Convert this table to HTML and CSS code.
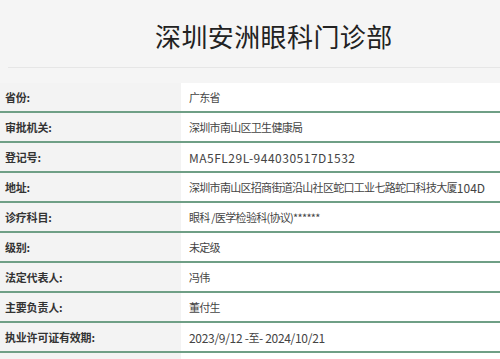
FILE: index.html
```html
<!DOCTYPE html>
<html lang="zh-CN">
<head>
<meta charset="utf-8">
<title>深圳安洲眼科门诊部</title>
<link rel="stylesheet" href="styles.css">
</head>
<body>
<div class="page">
  <header class="head">
    <h1 class="title">深圳安洲眼科门诊部</h1>
  </header>
  <div class="table">
    <div class="row"><div class="label">省份:</div><div class="value">广东省</div></div>
    <div class="row"><div class="label">审批机关:</div><div class="value">深圳市南山区卫生健康局</div></div>
    <div class="row"><div class="label">登记号:</div><div class="value"><span class="lat code">MA5FL29L-944030517D1532</span></div></div>
    <div class="row"><div class="label">地址:</div><div class="value">深圳市南山区招商街道沿山社区蛇口工业七路蛇口科技大厦<span class="lat">104D</span></div></div>
    <div class="row"><div class="label">诊疗科目:</div><div class="value">眼科 /医学检验科(协议)******</div></div>
    <div class="row"><div class="label">级别:</div><div class="value">未定级</div></div>
    <div class="row"><div class="label">法定代表人:</div><div class="value">冯伟</div></div>
    <div class="row"><div class="label">主要负责人:</div><div class="value">董付生</div></div>
    <div class="row"><div class="label">执业许可证有效期:</div><div class="value"><span class="lat date">2023/9/12 -</span>至<span class="lat date">- 2024/10/21</span></div></div>
    <div class="row"><div class="label"></div><div class="value"></div></div>
  </div>
</div>
</body>
</html>
```
FILE: styles.css
```css
* { box-sizing: border-box; }
html, body {
  margin: 0;
  padding: 0;
  background: #f5f5f5;
  font-family: "Noto Sans CJK SC", "Noto Sans", sans-serif;
  color: #333;
  overflow: hidden;
}
.page { width: 500px; }
.head {
  height: 68px;
  margin-left: 8px;
  border-bottom: 1px solid #e6e6e6;
  display: flex;
  align-items: center;
  padding-left: 147px;
}
.title {
  margin: 0;
  font-size: 26px;
  font-weight: 400;
  color: #222;
  line-height: 1;
  letter-spacing: 0.4px;
  padding-top: 4px;
}
.table { margin-top: 15px; }
.row {
  display: flex;
  height: 30px;
  border-bottom: 2px solid #6f9f86;
}
.label {
  width: 181px;
  flex: none;
  background: #f3f3f3;
  padding-left: 5px;
  font-size: 11px;
  font-weight: 700;
  color: #333;
  display: flex;
  align-items: center;
  letter-spacing: -0.2px;
}
.value {
  flex: 1;
  background: #fff;
  padding-left: 8px;
  font-size: 11px;
  color: #444;
  display: flex;
  align-items: center;
  white-space: pre;
  letter-spacing: -0.7px;
}
.lat {
  font-size: 12px;
  letter-spacing: 0;
}
.code { letter-spacing: 0.5px; }
.date { letter-spacing: -0.3px; }
```
